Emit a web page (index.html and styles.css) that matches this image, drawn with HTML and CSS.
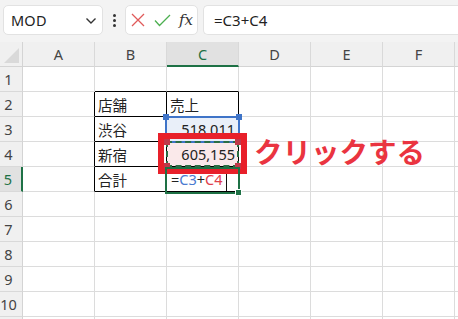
FILE: index.html
```html
<!DOCTYPE html>
<html lang="ja">
<head>
<meta charset="utf-8">
<link rel="stylesheet" href="styles.css">
</head>
<body>
<div class="toolbar">
  <div class="namebox">
    <span class="name">MOD</span>
    <svg class="chev" width="12" height="8" viewBox="0 0 12 8"><path d="M1.5 1.5 L6 6 L10.5 1.5" fill="none" stroke="#333" stroke-width="1.4"/></svg>
  </div>
  <div class="dots"><i></i><i></i><i></i></div>
  <div class="funcbox">
    <svg width="14" height="14" viewBox="0 0 14 14"><path d="M1 1 L13 13 M13 1 L1 13" stroke="#e05a5a" stroke-width="1.3" fill="none"/></svg>
    <svg width="17" height="13" viewBox="0 0 17 13"><path d="M1 6.5 L5.5 11.5 L16 1" stroke="#4caf50" stroke-width="1.3" fill="none"/></svg>
    <span class="fx">fx</span>
  </div>
  <div class="formula">=C3+C4</div>
</div>
<div class="sheet">
  <div class="cor"><span class="tri"></span></div>
  <div class="ch">A</div><div class="ch">B</div><div class="ch sel">C</div><div class="ch">D</div><div class="ch">E</div><div class="ch">F</div><div class="ch"></div>

  <div class="rh">1</div><div class="c"></div><div class="c bb"></div><div class="c bb"></div><div class="c"></div><div class="c"></div><div class="c"></div><div class="c"></div>
  <div class="rh">2</div><div class="c br"></div><div class="c tb">店舗</div><div class="c tb">売上</div><div class="c"></div><div class="c"></div><div class="c"></div><div class="c"></div>
  <div class="rh">3</div><div class="c br"></div><div class="c tb">渋谷</div><div class="c tb num blue">518,011</div><div class="c"></div><div class="c"></div><div class="c"></div><div class="c"></div>
  <div class="rh">4</div><div class="c br"></div><div class="c tb">新宿</div><div class="c tb num pink">605,155</div><div class="c"></div><div class="c"></div><div class="c"></div><div class="c"></div>
  <div class="rh sel">5</div><div class="c br"></div><div class="c tb">合計</div><div class="c tb edit">=<span class="rb">C3</span>+<span class="rr">C4</span><span class="caret"></span></div><div class="c"></div><div class="c"></div><div class="c"></div><div class="c"></div>
  <div class="rh">6</div><div class="c"></div><div class="c"></div><div class="c"></div><div class="c"></div><div class="c"></div><div class="c"></div><div class="c"></div>
  <div class="rh">7</div><div class="c"></div><div class="c"></div><div class="c"></div><div class="c"></div><div class="c"></div><div class="c"></div><div class="c"></div>
  <div class="rh">8</div><div class="c"></div><div class="c"></div><div class="c"></div><div class="c"></div><div class="c"></div><div class="c"></div><div class="c"></div>
  <div class="rh">9</div><div class="c"></div><div class="c"></div><div class="c"></div><div class="c"></div><div class="c"></div><div class="c"></div><div class="c"></div>
  <div class="rh">10</div><div class="c"></div><div class="c"></div><div class="c"></div><div class="c"></div><div class="c"></div><div class="c"></div><div class="c"></div>
  <div class="rh"></div><div class="c"></div><div class="c"></div><div class="c"></div><div class="c"></div><div class="c"></div><div class="c"></div><div class="c"></div>

  <div class="ref-blue"><i class="sq tl"></i><i class="sq tr"></i></div>
  <div class="annot"></div>
  <div class="ants"></div>
  <div class="ref-red"><i class="sq tl"></i><i class="sq tr"></i><i class="sq bl"></i><i class="sq br2"></i></div>
  <div class="active"><i class="handle"></i></div>
  <div class="label">クリックする</div>
</div>
</body>
</html>
```
FILE: styles.css
```css
html, body {
  margin: 0;
  padding: 0;
  width: 458px;
  height: 319px;
  overflow: hidden;
  background: #ffffff;
  font-family: "Noto Sans", "Noto Sans CJK JP", sans-serif;
}

.toolbar {
  height: 42px;
  box-sizing: border-box;
  background: #f3f3f3;
  display: flex;
  align-items: center;
  padding: 0 0 2px 3px;
  gap: 0;
}

.namebox {
  width: 100px;
  height: 30px;
  box-sizing: border-box;
  background: #fff;
  border: 1px solid #e2e2e2;
  border-radius: 5px;
  display: flex;
  align-items: center;
  justify-content: space-between;
  padding: 0 5px 0 7px;
}
.name {
  font-size: 14.5px;
  color: #222;
  letter-spacing: 0.2px;
}
.chev { margin-top: 1px; }

.dots {
  width: 22px;
  display: flex;
  flex-direction: column;
  align-items: center;
  gap: 2px;
}
.dots i {
  display: block;
  width: 3px;
  height: 3px;
  border-radius: 50%;
  background: #333;
}

.funcbox {
  width: 73px;
  height: 30px;
  box-sizing: border-box;
  background: #fff;
  border: 1px solid #e2e2e2;
  border-radius: 5px;
  display: flex;
  align-items: center;
  padding: 0 0 0 5px;
  gap: 9px;
}
.fx {
  font-family: "DejaVu Serif", "Liberation Serif", serif;
  font-style: italic;
  font-size: 15px;
  color: #333;
  margin-left: -1px;
}

.formula {
  flex: 1;
  margin-left: 5px;
  height: 30px;
  box-sizing: border-box;
  background: #fff;
  border: 1px solid #e2e2e2;
  border-right: none;
  border-radius: 5px 0 0 5px;
  display: flex;
  align-items: center;
  padding-left: 10px;
  font-size: 15px;
  color: #222;
}

.sheet {
  position: relative;
  display: grid;
  grid-template-columns: 23px repeat(6, 72px) 1fr;
  grid-template-rows: repeat(12, 25px);
  font-family: "Noto Sans", "Noto Sans CJK JP", sans-serif;
}

.cor {
  background: #f0f0f0;
  border-right: 1px solid #d4d4d4;
  border-bottom: 1px solid #d4d4d4;
  position: relative;
}
.tri {
  position: absolute;
  right: 3px;
  bottom: 3px;
  width: 0;
  height: 0;
  border-left: 15px solid transparent;
  border-bottom: 15px solid #d9d9d9;
}

.ch {
  background: #f0f0f0;
  border-right: 1px solid #d9d9d9;
  border-bottom: 1px solid #d4d4d4;
  display: flex;
  align-items: center;
  justify-content: center;
  font-size: 14.5px;
  color: #444;
}
.ch.sel {
  background: #e1e1e1;
  border-bottom: 2px solid #1e7145;
  color: #1e7145;
}

.rh {
  background: #f0f0f0;
  border-right: 1px solid #d4d4d4;
  border-bottom: 1px solid #d9d9d9;
  display: flex;
  align-items: center;
  justify-content: center;
  padding-right: 5px;
  font-size: 14.5px;
  color: #444;
}
.rh.sel {
  background: #e1e1e1;
  border-right: 2px solid #1e7145;
  color: #1e7145;
}

.c {
  border-right: 1px solid #dcdcdc;
  border-bottom: 1px solid #dcdcdc;
  display: flex;
  align-items: center;
  padding-left: 3px;
  font-family: "Noto Sans CJK JP", sans-serif;
  font-size: 14.5px;
  color: #222;
  white-space: nowrap;
  overflow: hidden;
}
.c.bb { border-bottom-color: #000; }
.c.br { border-right-color: #000; }
.c.tb {
  border-right-color: #000;
  border-bottom-color: #000;
}
.c.num {
  justify-content: flex-end;
  padding-right: 3px;
  font-family: "Noto Sans", sans-serif;
}
.c.blue { background: #e9eff9; }
.c.pink { background: #fae9ea; }
.c.edit {
  font-family: "Noto Sans", sans-serif;
  padding-left: 4px;
}
.rb { color: #4a7bd0; }
.rr { color: #e0404c; }
.caret {
  display: inline-block;
  width: 1px;
  height: 21px;
  background: #111;
  margin-left: 3px;
  align-self: flex-end;
}

.ref-blue {
  position: absolute;
  left: 165px;
  top: 74px;
  width: 75px;
  height: 27px;
  box-sizing: border-box;
  border: 2px solid #3f74c8;
}
.sq {
  position: absolute;
  width: 6px;
  height: 6px;
  background: #3f74c8;
}
.ref-blue .tl { left: -4px; top: -4px; }
.ref-blue .tr { right: -4px; top: -4px; }

.annot {
  position: absolute;
  left: 158px;
  top: 91px;
  width: 89px;
  height: 41px;
  box-sizing: border-box;
  border: 6px solid #e8202a;
}
.ants {
  position: absolute;
  left: 166px;
  top: 99px;
  width: 73px;
  height: 26px;
  box-sizing: border-box;
  border: 2px dashed #2a6e44;
}
.ref-red {
  position: absolute;
  left: 164px;
  top: 97px;
  width: 77px;
  height: 30px;
}
.ref-red .sq { background: #c0394a; width: 6px; height: 6px; }
.ref-red .tl { left: 0; top: 0; }
.ref-red .tr { right: 0; top: 0; }
.ref-red .bl { left: 0; bottom: 0; }
.ref-red .br2 { right: 0; bottom: 0; }

.active {
  position: absolute;
  left: 165px;
  top: 125px;
  width: 75px;
  height: 27px;
  box-sizing: border-box;
  border: 2px solid #1e7145;
}
.handle {
  position: absolute;
  right: -4px;
  bottom: -4px;
  width: 5px;
  height: 5px;
  background: #1e7145;
  border: 1px solid #fff;
}

.label {
  position: absolute;
  left: 254px;
  top: 89px;
  font-family: "Noto Sans CJK JP", sans-serif;
  font-weight: 700;
  font-size: 28.5px;
  line-height: 40px;
  color: #ea3440;
  letter-spacing: 0;
}
```
